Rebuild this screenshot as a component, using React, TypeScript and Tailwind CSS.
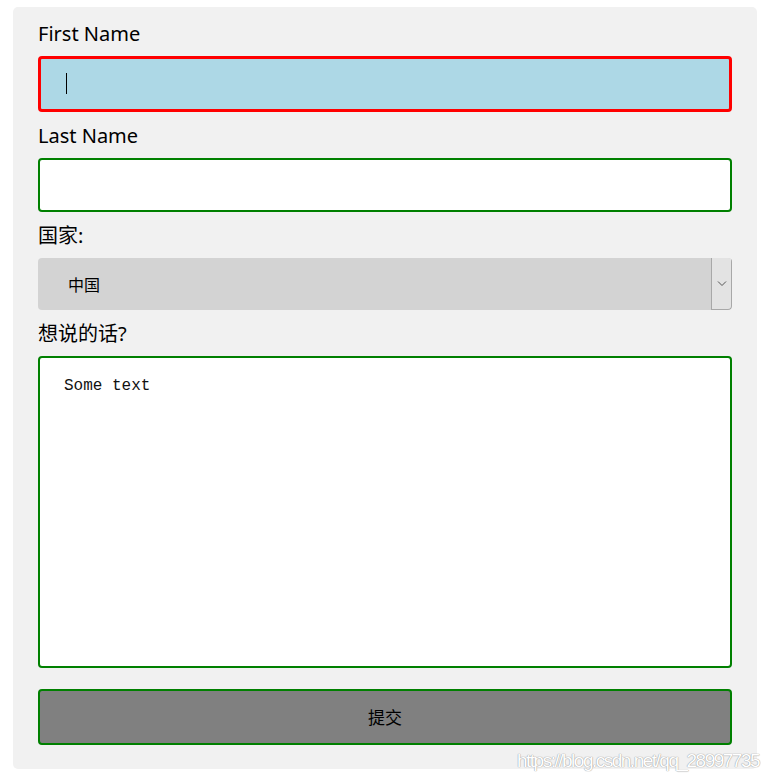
import React from "react";

const labelCls =
  "block h-[30px] leading-[32px] text-[20px] text-black [font-family:'Noto_Sans','Noto_Sans_CJK_SC',sans-serif]";

export default function App() {
  return (
    <div className="relative min-h-[777px] w-[771px] bg-white pt-[7px]">
      <div className="ml-[13px] w-[744px] rounded-[5px] bg-[#f1f1f1] px-[25px] pt-[11px] pb-[24px]">
        <div className={labelCls}>First Name</div>
        <div className="relative mt-2 mb-2 h-[56px] rounded-[4px] border-[3px] border-[#ff0000] bg-[#add8e6]">
          <span className="absolute left-[25px] top-[14px] h-[21px] w-px bg-black" />
        </div>

        <div className={labelCls}>Last Name</div>
        <div className="mt-2 mb-2 h-[54px] rounded-[4px] border-2 border-[#008000] bg-white" />

        <div className={labelCls}>国家:</div>
        <div className="mt-2 mb-2 flex h-[52px] overflow-hidden rounded-[4px] bg-[#d3d3d3]">
          <div className="flex flex-1 items-center pl-[30px] text-[16px] text-black [font-family:'Noto_Sans_CJK_SC',sans-serif]">
            中国
          </div>
          <div className="flex w-[21px] items-center justify-center rounded-br-[4px] border-x border-b border-[#a8a8a8] bg-[#e3e3e3]">
            <svg width="10" height="6" viewBox="0 0 10 6">
              <path d="M1 0.5 L5 4.5 L9 0.5" fill="none" stroke="#555" strokeWidth="1" />
            </svg>
          </div>
        </div>

        <div className={labelCls}>想说的话?</div>
        <div className="mt-2 h-[312px] rounded-[4px] border-2 border-[#008000] bg-white pl-[24px] pt-[18px]">
          <div className="text-[16px] leading-[20px] text-[#111] [font-family:'Liberation_Mono',monospace]">
            Some text
          </div>
        </div>

        <div className="mt-[21px] flex h-[56px] items-center justify-center rounded-[4px] border-2 border-[#008000] bg-[#808080] text-[17px] text-black [font-family:'Noto_Sans_CJK_SC',sans-serif]">
          提交
        </div>
      </div>

      <div className="absolute left-[517px] top-[747px] text-[19px] tracking-[-1.5px] text-white [font-family:'Liberation_Sans',sans-serif] [text-shadow:0_0_1px_#9a9a9a,0_0_1px_#9a9a9a]">
        https://blog.csdn.net/qq_28997735
      </div>
    </div>
  );
}
